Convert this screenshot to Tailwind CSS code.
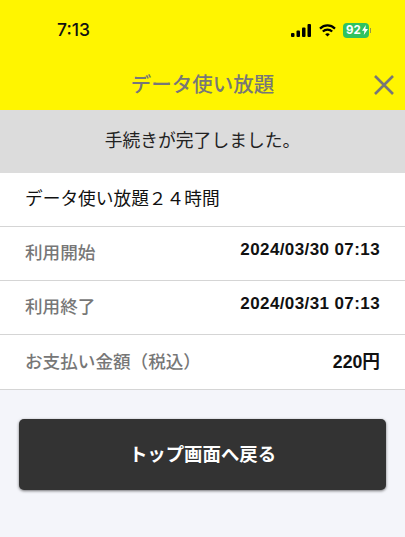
<!DOCTYPE html>
<html lang="ja">
  <head>
    <meta charset="UTF-8" />
    <meta name="viewport" content="width=device-width, initial-scale=1.0" />
    <title>データ使い放題</title>
    <script src="https://cdn.jsdelivr.net/npm/@tailwindcss/browser@4"></script>
  </head>
  <body class="bg-[#f4f5fa] font-['Liberation_Sans','Noto_Sans_CJK_JP',sans-serif]">
    <div class="w-[405px] h-[537px] overflow-hidden flex flex-col">
      <!-- status bar + title -->
      <header class="bg-[#fff500] h-[110px] shrink-0 flex flex-col">
        <div class="h-[60px] pl-[57px] pr-[36px] pt-[20px] flex items-start justify-between">
          <span class="text-[17.5px] leading-[20px] font-['Inter',sans-serif] font-medium text-[#111]">7:13</span>
          <div class="flex items-center gap-[7.5px] h-[20px]">
            <svg width="20" height="13" viewBox="0 0 20 13" fill="#000">
              <rect x="0" y="9" width="3.5" height="4" rx="1" />
              <rect x="5.5" y="6.5" width="3.5" height="6.5" rx="1" />
              <rect x="11" y="3.5" width="3.5" height="9.5" rx="1" />
              <rect x="16.5" y="0" width="3.5" height="13" rx="1" />
            </svg>
            <svg width="17" height="13" viewBox="0 0 17 13" fill="none" stroke="#000" stroke-width="2.2">
              <path d="M1 4.6C5.4 0.4 11.6 0.4 16 4.6" />
              <path d="M3.8 7.5C6.5 4.9 10.5 4.9 13.2 7.5" />
              <path d="M8.5 12.6L6.2 10.2C7.5 9 9.5 9 10.8 10.2Z" fill="#000" stroke="none" />
            </svg>
            <div class="relative w-[26px] h-[15px] rounded-[4px] bg-[#2fc25f] flex items-center pl-[3px] gap-[1px]">
              <span class="text-[11.5px] leading-[15px] font-bold text-white font-['Inter',sans-serif]">92</span>
              <svg class="shrink-0" width="6" height="10" viewBox="0 0 6 10" fill="#fff"><path d="M3.8 0L0 5.8H2.4L1.8 10L6 3.9H3.4Z" /></svg>
              <span class="absolute right-[-2px] top-[5px] w-[1px] h-[5px] bg-[#9a9a40]"></span>
            </div>
          </div>
        </div>
        <div class="relative flex-1 flex items-start justify-center">
          <h1 class="text-[20.5px] leading-[28px] mt-[11px] font-medium text-[#777777]">データ使い放題</h1>
          <svg class="absolute right-[11px] top-[15px]" width="20" height="20" viewBox="0 0 20 20" stroke="#777777" stroke-width="2.6"><path d="M1 1L19 19M19 1L1 19" /></svg>
        </div>
      </header>

      <div class="bg-[#dcdcdc] h-[63px] shrink-0 flex items-center justify-center text-[17.8px] text-[#222]">手続きが完了しました。</div>

      <!-- details -->
      <div class="bg-white">
        <div class="h-[54px] px-[25px] flex items-center border-b border-[#d5d5d5] text-[17.7px] text-[#111]">データ使い放題２４時間</div>
        <div class="h-[54px] px-[25px] flex items-center justify-between border-b border-[#d5d5d5]">
          <span class="text-[17.6px] font-medium text-[#777777]">利用開始</span>
          <span class="text-[17px] tracking-[0.4px] font-bold text-[#111] mb-[7px]">2024/03/30 07:13</span>
        </div>
        <div class="h-[54px] px-[25px] flex items-center justify-between border-b border-[#d5d5d5]">
          <span class="text-[17.6px] font-medium text-[#777777]">利用終了</span>
          <span class="text-[17px] tracking-[0.4px] font-bold text-[#111] mb-[7px]">2024/03/31 07:13</span>
        </div>
        <div class="h-[55px] px-[25px] flex items-center justify-between border-b border-[#d5d5d5]">
          <span class="text-[17.6px] font-medium text-[#777777]">お支払い金額（税込）</span>
          <span class="text-[17.7px] font-bold text-[#111]">220円</span>
        </div>
      </div>

      <div class="px-[19px] pt-[29px]">
        <button class="w-full h-[71px] rounded-[5px] bg-[#333333] text-white text-[18.4px] font-bold shadow-[0_1px_3px_rgba(0,0,0,0.55)]">トップ画面へ戻る</button>
      </div>
    </div>
  </body>
</html>
